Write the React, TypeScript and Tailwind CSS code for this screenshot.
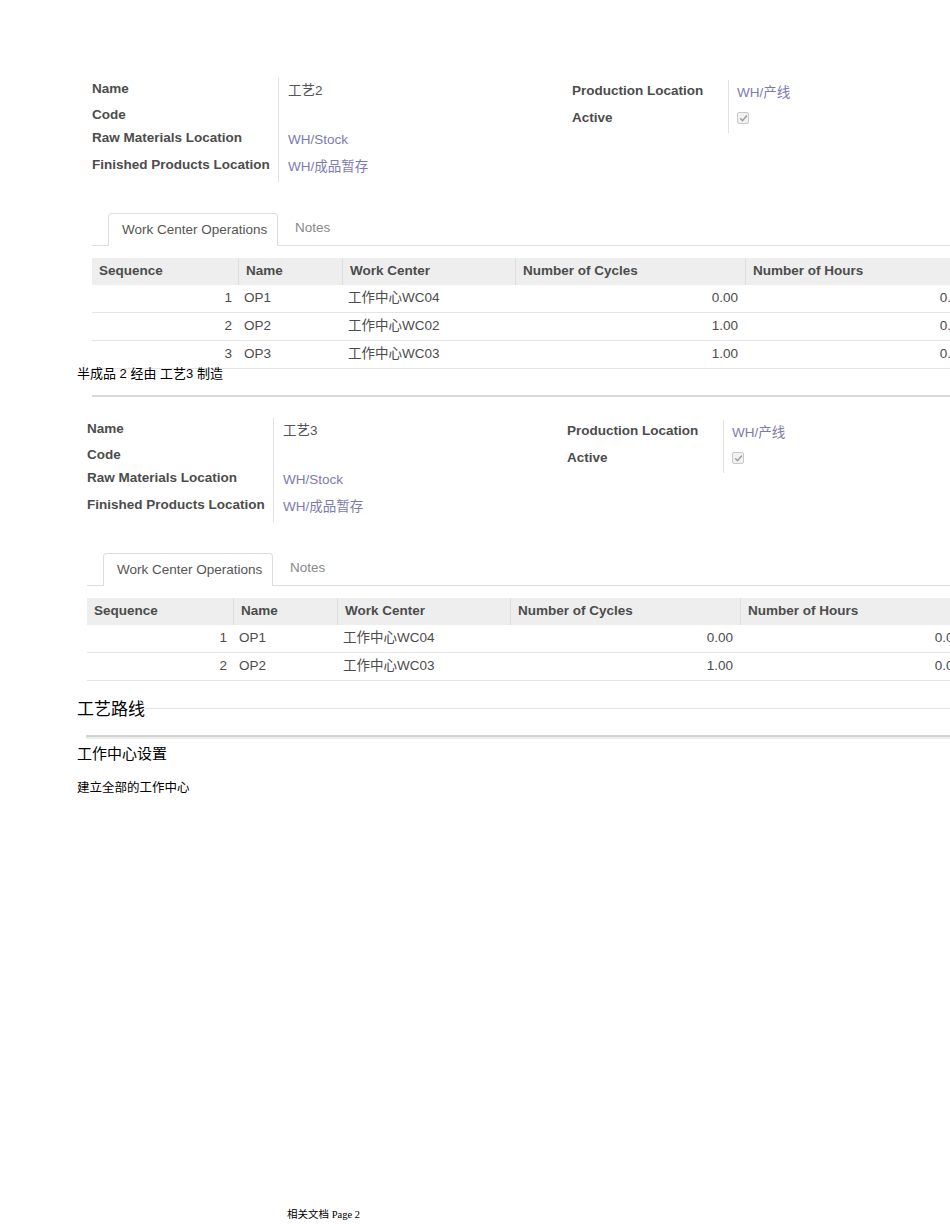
import React from "react";

const FONT = { fontFamily: "'Liberation Sans', 'Noto Sans CJK SC', Arial, sans-serif" };
const CJK = { fontFamily: "'Noto Sans CJK SC', 'Liberation Sans', sans-serif" };

function Checkbox() {
  return (
    <div className="w-[12px] h-[12px] rounded-[2px] border border-[#c8c8c8] bg-[#f2f2f2] flex items-center justify-center">
      <svg width="9" height="9" viewBox="0 0 10 10">
        <path d="M1.8 5.2 L4 7.4 L8.3 2.3" fill="none" stroke="#9a9a9a" strokeWidth="1.6" strokeLinecap="round" strokeLinejoin="round" />
      </svg>
    </div>
  );
}

type Row = { seq: string; name: string; wc: string; cycles: string; hours: string };

function Section({ name, rows, left }: { name: string; rows: Row[]; left: string }) {
  return (
    <div className={left}>
      {/* form */}
      <div className="flex text-[13.5px] leading-[16px]">
        <div className="w-[480px] flex">
          <div className="w-[186px] font-bold text-[#4c4c4c]">
            <div className="h-[25px] pt-[3px]">Name</div>
            <div className="h-[23px] pt-[4px]">Code</div>
            <div className="h-[25px] pt-[4px]">Raw Materials Location</div>
            <div className="h-[31px] pt-[6px]">Finished Products Location</div>
          </div>
          <div className="border-l border-[#e2e2e2] pl-[9px]">
            <div className="h-[25px] pt-[5px] text-[#555]">{name}</div>
            <div className="h-[23px]" />
            <div className="h-[25px] pt-[6px] text-[#7c7bad]">WH/Stock</div>
            <div className="h-[31px] pt-[8px] text-[#7c7bad]">WH/成品暂存</div>
          </div>
        </div>
        <div className="flex pt-[2px]">
          <div className="w-[156px] font-bold text-[#4c4c4c]">
            <div className="h-[25px] pt-[3px]">Production Location</div>
            <div className="h-[28px] pt-[5px]">Active</div>
          </div>
          <div className="border-l border-[#e2e2e2] pl-[8px] h-[53px]">
            <div className="h-[25px] pt-[5px] text-[#7c7bad]">WH/产线</div>
            <div className="h-[28px] pt-[7px]">
              <Checkbox />
            </div>
          </div>
        </div>
      </div>

      {/* tabs */}
      <div className="mt-[31px] h-[33px] border-b border-[#dddddd] flex items-end text-[13.5px]">
        <div className="ml-[16px] w-[170px] h-[33px] -mb-px bg-white border border-b-0 border-[#dddddd] rounded-t-[4px] flex items-center pl-[13px] text-[#555]">
          Work Center Operations
        </div>
        <div className="h-[33px] flex items-center pl-[17px] text-[#888]">Notes</div>
      </div>

      {/* table */}
      <div className="mt-[12px] w-[883px] text-[13.5px]">
        <div className="h-[27px] bg-[#eeeeee] flex items-center font-bold text-[#4c4c4c]">
          <div className="w-[146px] h-full flex items-center pl-[7px]">Sequence</div>
          <div className="w-[104px] h-full flex items-center pl-[7px] border-l border-[#dedede]">Name</div>
          <div className="w-[173px] h-full flex items-center pl-[7px] border-l border-[#dedede]">Work Center</div>
          <div className="w-[230px] h-full flex items-center pl-[7px] border-l border-[#dedede]">Number of Cycles</div>
          <div className="w-[230px] h-full flex items-center pl-[7px] border-l border-[#dedede]">Number of Hours</div>
        </div>
        {rows.map((r) => (
          <div key={r.seq} className="h-[28px] flex items-center border-b border-[#e4e4e4] text-[#4c4c4c]">
            <div className="w-[146px] text-right pr-[6px]">{r.seq}</div>
            <div className="w-[104px] pl-[6px]">{r.name}</div>
            <div className="w-[173px] pl-[6px]">{r.wc}</div>
            <div className="w-[230px] text-right pr-[7px]">{r.cycles}</div>
            <div className="w-[230px] text-right pr-[9px]">{r.hours}</div>
          </div>
        ))}
      </div>
    </div>
  );
}

export default function App() {
  const rows1: Row[] = [
    { seq: "1", name: "OP1", wc: "工作中心WC04", cycles: "0.00", hours: "0.00" },
    { seq: "2", name: "OP2", wc: "工作中心WC02", cycles: "1.00", hours: "0.00" },
    { seq: "3", name: "OP3", wc: "工作中心WC03", cycles: "1.00", hours: "0.00" },
  ];
  const rows2: Row[] = [
    { seq: "1", name: "OP1", wc: "工作中心WC04", cycles: "0.00", hours: "0.00" },
    { seq: "2", name: "OP2", wc: "工作中心WC03", cycles: "1.00", hours: "0.00" },
  ];
  return (
    <div className="w-[950px] h-[1230px] overflow-hidden bg-white flex flex-col" style={FONT}>
      <div className="pt-[78px]">
        <Section name="工艺2" rows={rows1} left="pl-[92px]" />
      </div>
      <div className="pl-[77px] -mt-[1px] text-[13px] leading-[12px] text-black" style={FONT}>
        半成品 2 经由 工艺3 制造
      </div>
      <div className="ml-[92px] mt-[15px] h-[2px] bg-[#d9d9d9]" />
      <div className="mt-[21px]">
        <Section name="工艺3" rows={rows2} left="pl-[87px]" />
      </div>
      <div className="mt-[17px] pl-[77px] flex items-center h-[20px]" style={CJK}>
        <div className="text-[17px] leading-[20px] text-black">工艺路线</div>
        <div className="flex-1 h-px bg-[#e3e3e3]" />
      </div>
      <div className="ml-[86px] mt-[17px] flex flex-col">
        <div className="h-[2px] bg-[#d2d2d2]" />
        <div className="h-[2px] bg-[#ececec]" />
      </div>
      <div className="pl-[77px] mt-[5px] text-[15px] leading-[18px] text-black" style={CJK}>
        工作中心设置
      </div>
      <div className="pl-[77px] mt-[18px] text-[12.5px] leading-[14px] text-black" style={CJK}>
        建立全部的工作中心
      </div>
      <div className="mt-auto pb-[8px] pl-[287px] text-[10.5px] leading-[14px] text-black">
        <span style={CJK}>相关文档</span>
        <span style={{ fontFamily: "'Liberation Serif', serif" }}> Page 2</span>
      </div>
    </div>
  );
}
